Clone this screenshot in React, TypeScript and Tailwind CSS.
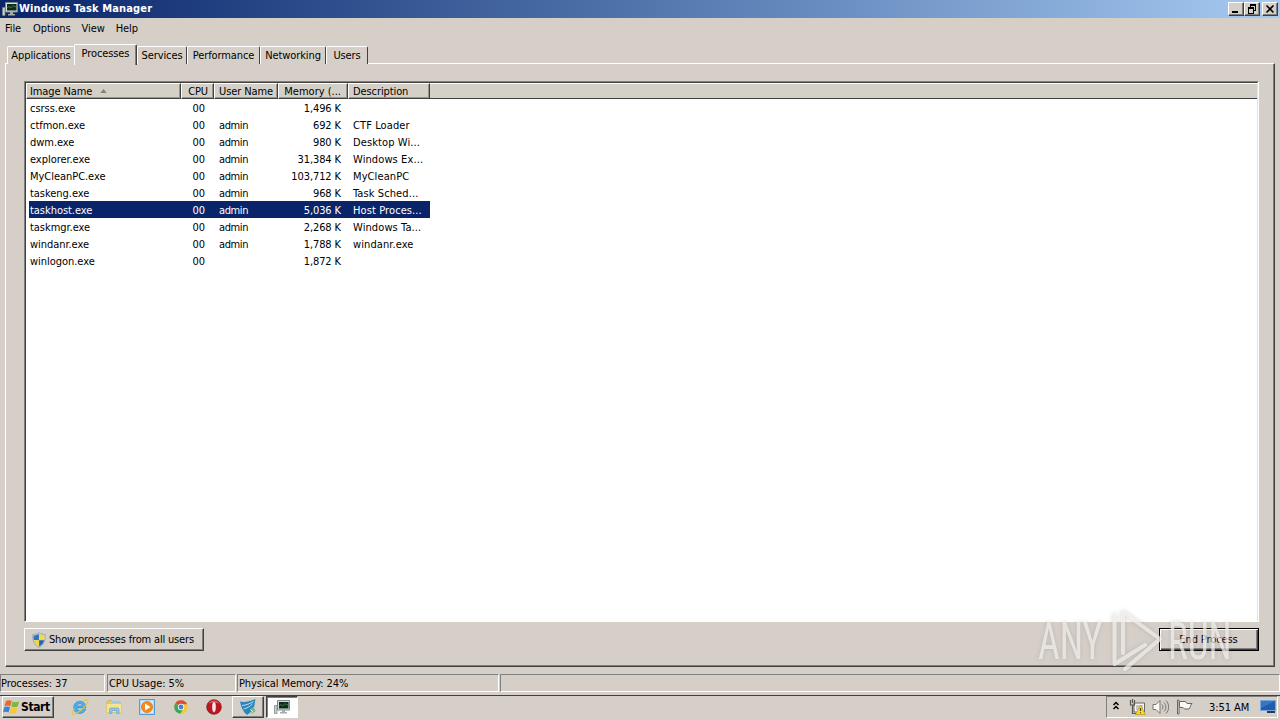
import type { ReactNode } from "react";

const processes = [
  { name: "csrss.exe", user: "", memory: "1,496 K", description: "" },
  { name: "ctfmon.exe", user: "admin", memory: "692 K", description: "CTF Loader" },
  { name: "dwm.exe", user: "admin", memory: "980 K", description: "Desktop Wi..." },
  { name: "explorer.exe", user: "admin", memory: "31,384 K", description: "Windows Ex..." },
  { name: "MyCleanPC.exe", user: "admin", memory: "103,712 K", description: "MyCleanPC" },
  { name: "taskeng.exe", user: "admin", memory: "968 K", description: "Task Sched..." },
  { name: "taskhost.exe", user: "admin", memory: "5,036 K", description: "Host Proces...", selected: true },
  { name: "taskmgr.exe", user: "admin", memory: "2,268 K", description: "Windows Ta..." },
  { name: "windanr.exe", user: "admin", memory: "1,788 K", description: "windanr.exe" },
  { name: "winlogon.exe", user: "", memory: "1,872 K", description: "" },
];

const tabs = [
  { label: "Applications", width: "w-[67px]" },
  { label: "Processes", width: "w-[63px]", active: true },
  { label: "Services", width: "w-[50px]" },
  { label: "Performance", width: "w-[73px]" },
  { label: "Networking", width: "w-[66px]" },
  { label: "Users", width: "w-[42px]" },
];

function MonitorIcon({ className }: { className?: string }) {
  return (
    <svg viewBox="0 0 16 16" className={className}>
      <path d="M0.5 6.5h2.500v8H0.5z" fill="#c9d1ce" stroke="#77827f" strokeWidth="0.7" />
      <path d="M3.500 1.500h12v9.500h-12z" fill="#d8dcda" stroke="#7d8784" />
      <path d="M5 3h9.500v6.500H5z" fill="#0f2a1c" />
      <path d="M5 7l2-1.500 2 1.500 2-2.500 1.500 1.500 2-1" fill="none" stroke="#2b7f3b" />
      <path d="M8 11h3v2H8zM6 13h7v1.500H6z" fill="#a5acaa" />
    </svg>
  );
}

function ShieldIcon() {
  return (
    <svg viewBox="0 0 16 16" className="h-4 w-4 shrink-0">
      <path d="M8 0.800C6 2 4 2.500 1.800 2.500 1.500 8.500 3 13 8 15.500 13 13 14.500 8.500 14.200 2.500 12 2.500 10 2 8 0.800z" fill="#c9d6e2" stroke="#8896a5" strokeWidth="0.700" />
      <path d="M7.900 2V8H2.800c-.3-1.500-.3-3-.2-4.500 2 0 3.700-.6 5.300-1.500z" fill="#2f71c4" />
      <path d="M8.100 2V8h5.100c.3-1.500.3-3 .2-4.500-2 0-3.700-.6-5.300-1.500z" fill="#f2dc37" />
      <path d="M7.900 8.200v6.200C5.200 13 3.500 11 2.900 8.200z" fill="#f2d62b" />
      <path d="M8.100 8.200v6.200c2.700-1.400 4.400-3.400 5-6.200z" fill="#2764b5" />
    </svg>
  );
}

function WindowsFlag() {
  return (
    <svg viewBox="0 0 18 16" className="h-4 w-[18px] shrink-0">
      <path d="M3 2C5 .8 7 1 8.700 2L7.300 7.300C5.500 6.200 3.500 6.200 1.500 7.200z" fill="#e9682b" />
      <path d="M9.600 2.500c2 1 4.200 1 6.600-.2l-1.500 5.300c-2.200 1-4.400 1-6.400 0z" fill="#7cb83d" />
      <path d="M1.300 8.200c2-1 3.900-.9 5.700.1l-1.400 5.300C4 12.600 2 12.600 0 13.600z" fill="#3d83cf" />
      <path d="M8 8.600c2 1 4.200 1 6.400 0L13 14c-2.200 1-4.500 1-6.500-.1z" fill="#f6c63b" />
    </svg>
  );
}

function ExplorerEIcon() {
  return (
    <svg viewBox="0 0 18 18" className="h-[18px] w-[18px]">
      <path d="M14.800 10H5.500c.2 2.500 4.600 3.600 6.200 1.200h3c-1 2.800-3.200 4.300-6 4.300-3.500 0-6-2.600-6-6s2.700-6.300 6.200-6.300c3.700 0 6.200 2.800 5.900 6.800zM5.700 7.900h6c-.3-2.800-5.600-2.900-6 0z" fill="#49b2ea" stroke="#2385c6" strokeWidth="0.600" />
      <path d="M3.500 10.500C.5 14.500.4 17 3.200 16.200c4-1.200 12-7.700 13.700-12.300.9-2.700-1.800-2.400-4.600-.7" fill="none" stroke="#e6c351" strokeWidth="1.100" />
    </svg>
  );
}

function FolderIcon() {
  return (
    <svg viewBox="0 0 18 18" className="h-[18px] w-[18px]">
      <path d="M2 3.500 6 2l1.500 1.500H15v3H2z" fill="#e8ca69" stroke="#c6a544" strokeWidth="0.600" />
      <path d="M7 3h8v4H7z" fill="#9bcbe5" />
      <path d="M1.500 5.500h15v9h-15z" fill="#f7e493" stroke="#dac063" strokeWidth="0.700" />
      <path d="M4.500 15.500v-4c0-1 .5-1.500 1.500-1.500h6.500c1 0 1.500.5 1.500 1.500v4h-2.500v-3H7v3z" fill="#8dc7e9" stroke="#5d9bc3" strokeWidth="0.600" />
    </svg>
  );
}

function MediaIcon() {
  return (
    <svg viewBox="0 0 18 18" className="h-[18px] w-[18px]">
      <path d="M1.500 1.500h15v15h-15z" fill="#b4d9f5" stroke="#559bd4" />
      <path d="M3 3h12v12H3z" fill="#d8ebf8" />
      <circle cx="9" cy="9" r="5.600" fill="#f18a1d" stroke="#d86b0c" strokeWidth="0.600" />
      <path d="M7 5.600 12.500 9 7 12.400z" fill="#fff" />
    </svg>
  );
}

function ChromeIcon() {
  return (
    <svg viewBox="0 0 18 18" className="h-[18px] w-[18px]">
      <circle cx="9" cy="9" r="6.800" fill="#f4c837" />
      <path d="M9 9 3.200 5.500A6.800 6.800 0 0 1 15.200 6.300H9z" fill="#dc4b3e" />
      <path d="M9 9 3.200 5.500A6.800 6.800 0 0 0 8.300 15.800L11 11z" fill="#37a95a" />
      <circle cx="9" cy="9" r="3.200" fill="#f4f4f4" />
      <circle cx="9" cy="9" r="2.400" fill="#4284d8" />
    </svg>
  );
}

function OperaIcon() {
  return (
    <svg viewBox="0 0 18 18" className="h-[18px] w-[18px]">
      <circle cx="9" cy="9" r="7.300" fill="#bd1620" stroke="#8a0c13" strokeWidth="0.700" />
      <path d="M3.500 5.500C6 1.600 12 1.600 14.500 5.500c-3-1.500-8-1.500-11 0z" fill="#dd6066" />
      <ellipse cx="9" cy="9" rx="2.100" ry="5.400" fill="#f4e9e8" stroke="#8e1017" strokeWidth="0.500" />
    </svg>
  );
}

function CleanerIcon() {
  return (
    <svg viewBox="0 0 18 18" className="h-[18px] w-[18px]">
      <path d="M1 3.500C5 4.600 10 3.500 16.500 1c-1 4-.5 7-2.500 10-1.500 2.500-3 4-6 6C4 14 2 9 1 3.500z" fill="#2c86bd" />
      <path d="M3 7.500c4-.3 8-1.800 11.500-4M4.500 11c3.500-.8 6.500-2.600 9-5" fill="none" stroke="#b7dced" />
      <path d="m11 12 3.500-3.500L16.500 13l-3 3z" fill="#78b78a" />
      <path d="m11.500 11.500 3 3" stroke="#dcebe2" />
    </svg>
  );
}

function WindowButton({ children }: { children: ReactNode }) {
  return (
    <span className="flex h-[14px] w-4 items-center justify-center border border-t-white border-r-[#404040] border-b-[#404040] border-l-white bg-[#d6cfc8] shadow-[inset_-1px_-1px_#808080]">
      <svg viewBox="0 0 14 12" className="h-3 w-[14px] shrink-0" fill="none" stroke="black" shapeRendering="crispEdges">
        {children}
      </svg>
    </span>
  );
}

function TitleBar() {
  return (
    <div className="flex h-[18px] items-center bg-linear-to-r from-[#0a246a] to-[#a6caf0] pr-[2px] pl-[2px] text-white">
      <MonitorIcon className="h-4 w-4" />
      <span className="ml-px text-[11px] leading-[18px] font-bold tracking-[0.130px]">Windows Task Manager</span>
      <div className="ml-auto flex">
        <WindowButton>
          <path d="M3 9h6" strokeWidth="2" />
        </WindowButton>
        <WindowButton>
          <path d="M5 1.500h6M5 2.500h6M5.500 2v3M10.500 2v6M8 7.500h3M3 4.500h6M3 5.500h6M3.500 5v6M8.500 5v6M3 10.500h6" />
        </WindowButton>
        <span className="w-[2px]" />
        <WindowButton>
          <path d="m3.500 2.500 7 7m0-7-7 7" strokeWidth="1.600" shapeRendering="auto" />
        </WindowButton>
      </div>
    </div>
  );
}

function Tabs() {
  return (
    <div className="ml-[2px] flex h-[21px] items-end">
      {tabs.map((tab) => (
        <div
          key={tab.label}
          className={`relative flex shrink-0 justify-center rounded-t-[2px] border-t border-r border-l border-t-white border-r-[#404040] border-l-white bg-[#d6cfc8] ${tab.width} ${
            tab.active ? "z-10 -mb-px h-[21px] w-[63px] shadow-[inset_-1px_0_#808080]" : "h-[18px]"
          } ${tab.label === "Applications" ? "border-r-0" : ""}`}
        >
          <span className="whitespace-nowrap">{tab.label}</span>
        </div>
      ))}
    </div>
  );
}

function HeaderCell({ className, children }: { className: string; children?: ReactNode }) {
  return (
    <div className={`flex h-4 shrink-0 items-center overflow-hidden border border-t-white border-r-[#404040] border-b-[#404040] border-l-white bg-[#d4d0c8] whitespace-nowrap shadow-[inset_-1px_-1px_#999690] ${className}`}>
      {children}
    </div>
  );
}

function ProcessList() {
  return (
    <div className="h-[541px] border-t border-r border-b border-l border-t-[#808080] border-r-white border-b-white border-l-[#808080]">
      <div className="h-full border-t border-r border-l border-t-[#404040] border-r-[#e6e1da] border-l-[#404040] bg-white">
        <div className="flex">
          <HeaderCell className="w-[155px] pl-[3px]">
            Image Name
            <svg viewBox="0 0 8 5" className="ml-2 h-1 w-[7px]">
              <path d="M0 5 4 0l4 5z" fill="#85817b" />
            </svg>
          </HeaderCell>
          <HeaderCell className="w-[33px] justify-end pr-[5px]">CPU</HeaderCell>
          <HeaderCell className="w-[64px] pl-[4px]">User Name</HeaderCell>
          <HeaderCell className="w-[70px] justify-end pr-[6px] tracking-normal">Memory (...</HeaderCell>
          <HeaderCell className="w-[82px] pl-[4px]">Description</HeaderCell>
          <div className="h-4 grow border-b border-b-[#404040] bg-[#d4d0c8] shadow-[inset_0_1px_white]" />
        </div>
        {processes.map((process) => (
          <div
            key={process.name}
            className={`ml-[3px] flex h-[17px] w-[401px] leading-[19px] whitespace-nowrap ${process.selected ? "bg-[#0a246a] text-white" : ""}`}
          >
            <span className="w-[152px] pl-px tracking-[-0.040px]">{process.name}</span>
            <span className="w-[24px] text-right">00</span>
            <span className="w-[72px] pl-[14px] tracking-[-0.400px]">{process.user}</span>
            <span className="w-[64px] text-right tracking-[-0.100px]">{process.memory}</span>
            <span className="pl-[12px] tracking-[0.100px]">{process.description}</span>
          </div>
        ))}
      </div>
    </div>
  );
}

function StatusCell({ className, children }: { className: string; children?: ReactNode }) {
  return (
    <div className={`h-[18px] border border-t-[#808080] border-r-white border-b-white border-l-[#808080] leading-[17px] ${className}`}>
      {children}
    </div>
  );
}

function TrayIcons() {
  return (
    <div className="ml-auto flex h-[22px] w-[172px] items-center border border-t-[#808080] border-r-white border-b-white border-l-[#808080] pl-[5px]">
      <svg viewBox="0 0 8 10" className="-mt-[2px] h-[10px] w-2" fill="none" stroke="black" strokeWidth="1.500">
        <path d="m1.500 4 2.500-2.500L6.500 4M1.500 8l2.500-2.500L6.500 8" />
      </svg>
      <svg viewBox="0 0 17 16" className="ml-[9px] h-4 w-[17px]">
        <path d="M5 4h10.500v9H5z" fill="#f5f5f3" stroke="#686865" />
        <path d="M7 6h7v5H7z" fill="#c7c6c2" />
        <path d="M1.500 1v5h4V1M3.500 6v8.500h5M3.500 0v4" fill="none" stroke="#565652" strokeWidth="1.200" />
        <path d="m11.500 6 5 9.500h-10z" fill="#f8d839" stroke="#bc9b17" strokeWidth="0.700" />
        <path d="M11.500 9v3M11.500 13.200v1" stroke="#4e3d00" strokeWidth="1.200" />
      </svg>
      <svg viewBox="0 0 17 16" className="ml-[6px] h-4 w-[17px]" fill="none" stroke="#777570">
        <path d="M1 5.500h3l4-4v13l-4-4H1z" fill="#f9f8f5" />
        <path d="M10 5.500c1.300 1.500 1.300 3.500 0 5M12 3.500c2.500 2.500 2.500 6.500 0 9M14 1.500c3.500 3.500 3.500 9.500 0 13" />
      </svg>
      <svg viewBox="0 0 17 16" className="ml-[7px] h-4 w-[17px]" fill="#faf9f6" stroke="#696762">
        <path d="M1.500 1h1.500v14H1.500z" />
        <path d="M3.500 2.500h6l1.500 2h5c-2 2-1.500 4-3 5.500H8.500L7 8.500H3.500z" />
      </svg>
      <span className="ml-[16px] tracking-[-0.050px] whitespace-nowrap">3:51 AM</span>
      <svg viewBox="0 0 16 14" className="ml-auto mr-px h-[14px] w-4 shrink-0">
        <path d="M.5.500h15v10H.5z" fill="#225dad" stroke="#77a5dc" />
        <path d="M1 1h14L1 8z" fill="#3975c2" />
        <path d="M7 11h8v2H7z" fill="#253c60" />
      </svg>
    </div>
  );
}

function Taskbar() {
  return (
    <div className="flex h-[24px] items-start bg-[#d6cfc8] pr-[2px] pl-[2px]">
      <div className="flex h-[22px] w-[52px] items-center border border-t-white border-r-[#404040] border-b-[#404040] border-l-white shadow-[inset_-1px_-1px_#808080]">
        <WindowsFlag />
        <span className="text-[12px] leading-5 font-bold tracking-[-0.4px]">Start</span>
      </div>
      <div className="ml-[17px] flex h-[22px] items-center gap-[15.500px]">
        <ExplorerEIcon />
        <FolderIcon />
        <MediaIcon />
        <ChromeIcon />
        <OperaIcon />
      </div>
      <div className="ml-[9px] flex h-[22px] w-[32px] items-center justify-center border border-t-white border-r-[#404040] border-b-[#404040] border-l-white shadow-[inset_-1px_-1px_#808080]">
        <CleanerIcon />
      </div>
      <div className="ml-[2px] flex h-[22px] w-[32px] items-center justify-center border border-t-[#404040] border-r-white border-b-white border-l-[#404040] bg-white shadow-[inset_1px_1px_#808080]">
        <MonitorIcon className="h-4 w-4" />
      </div>
      <TrayIcons />
    </div>
  );
}

function Watermark() {
  return (
    <div className="pointer-events-none absolute top-[606px] left-[1038px] flex h-[68px] w-[198px] items-center text-[#f5f3f0]/70 drop-shadow-[0_0_2px_#8888]">
      <span className="w-[74px] origin-left scale-x-[0.740] pt-[4px] font-['Roboto'] text-[51px] leading-[64px] font-normal">ANY</span>
      <svg viewBox="0 0 56 68" className="h-[68px] w-[56px] shrink-0" fill="none" stroke="#f5f3f0" strokeLinejoin="round" strokeLinecap="round" strokeOpacity="0.7" strokeWidth="4">
        <path d="M2.500 9v49L33 39M11 47V6l37 27L13 63" />
      </svg>
      <span className="w-[49px] origin-left scale-x-[0.730] pt-[4px] font-['Roboto'] text-[51px] leading-[64px] font-normal">RUN</span>
    </div>
  );
}

export default function App() {
  return (
    <div className="relative flex h-[720px] w-[1280px] flex-col overflow-hidden bg-[#d6cfc8] font-['DejaVu_Sans_Condensed','DejaVu_Sans',sans-serif] text-[11px] leading-[17px] tracking-[-0.100px] text-black [font-stretch:condensed]">
      <TitleBar />
      <div className="flex h-[25px] gap-[12px] pt-[2px] pl-[5px]">
        <span>File</span>
        <span>Options</span>
        <span className="-ml-px">View</span>
        <span className="-ml-px">Help</span>
      </div>
      <div className="pr-[5px] pl-[5px]">
        <Tabs />
        <div className="-mt-px h-[604px] border border-t-white border-r-[#404040] border-b-[#404040] border-l-white pt-[17px] pr-[15px] pl-[18px] shadow-[inset_-1px_-1px_#808080]">
          <ProcessList />
          <div className="mt-[6px] flex justify-between">
            <button className="flex h-[23px] w-[180px] items-center border border-t-white border-r-[#404040] border-b-[#404040] border-l-white pl-[6px] text-left shadow-[inset_-1px_-1px_#808080]">
              <ShieldIcon />
              <span className="ml-[2px] tracking-[-0.170px] whitespace-nowrap">Show processes from all users</span>
            </button>
            <button className="h-[23px] w-[100px] border border-black pr-px shadow-[inset_1px_1px_white,inset_-1px_-1px_#404040,inset_-2px_-2px_#808080]">
              End Process
            </button>
          </div>
        </div>
      </div>
      <div className="mt-auto flex h-[21px] gap-px">
        <StatusCell className="w-[105px]">Processes: 37</StatusCell>
        <StatusCell className="ml-px w-[129px] pl-px">CPU Usage: 5%</StatusCell>
        <StatusCell className="w-[262px] pl-px">Physical Memory: 24%</StatusCell>
        <StatusCell className="grow" />
      </div>
      <div className="h-px bg-[#404040]" />
      <Taskbar />
      <Watermark />
    </div>
  );
}
